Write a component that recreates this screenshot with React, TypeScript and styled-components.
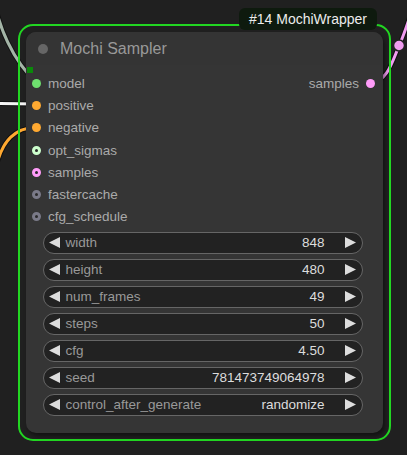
import styled, { createGlobalStyle } from "styled-components";

const GlobalStyle = createGlobalStyle`
  html, body {
    margin: 0;
    padding: 0;
    background: #202020;
  }
  body {
    font-family: "Liberation Sans", Arial, sans-serif;
  }
`;

const Canvas = styled.div`
  position: relative;
  width: 407px;
  height: 455px;
  overflow: hidden;
  box-sizing: border-box;
  padding: 24px 0 0 18px;
  background: #202020;
`;

const Wires = styled.svg`
  position: absolute;
  left: 0;
  top: 0;
  z-index: 0;
`;

const Frame = styled.div`
  position: relative;
  z-index: 1;
  width: 373px;
  height: 417px;
  box-sizing: border-box;
  border: 2px solid #22d622;
  border-radius: 15px;
  padding: 6px 6px 6px 6px;
`;

const Badge = styled.div`
  position: absolute;
  z-index: 2;
  left: 239px;
  top: 8px;
  width: 138px;
  height: 22px;
  box-sizing: border-box;
  border-radius: 6px;
  background: #0e1a0e;
  color: #ececec;
  font-size: 14px;
  line-height: 22px;
  text-align: center;
`;

const Node = styled.div`
  position: relative;
  height: 100%;
  box-sizing: border-box;
  border-radius: 10px;
  background: #353535;
  box-shadow: 2px 3px 4px rgba(0, 0, 0, 0.45);
  padding-bottom: 17px;
`;

const TitleBar = styled.div`
  display: flex;
  align-items: center;
  height: 33px;
  padding-left: 12px;
  gap: 12px;
  background: #343434;
  border-radius: 10px 10px 0 0;
  color: #999;
  font-size: 16px;
`;

const TitleDot = styled.span`
  width: 10px;
  height: 10px;
  border-radius: 50%;
  background: #666;
`;

const Marker = styled.span`
  position: absolute;
  left: 1px;
  top: 35px;
  width: 6px;
  height: 6px;
  background: #0a8a0a;
`;

const Slots = styled.div`
  display: grid;
  grid-template-columns: 1fr auto;
  padding-top: 7px;
`;

const SlotColumn = styled.div<{ $right?: boolean }>`
  display: flex;
  flex-direction: column;
  align-items: ${(p) => (p.$right ? "flex-end" : "flex-start")};
`;

const SlotRow = styled.div<{ $right?: boolean }>`
  display: flex;
  flex-direction: ${(p) => (p.$right ? "row-reverse" : "row")};
  align-items: center;
  height: 22.3px;
  gap: 7px;
  padding: ${(p) => (p.$right ? "0 8px 0 0" : "0 0 0 6px")};
  color: #aaa;
  font-size: 13.5px;
`;

const Dot = styled.span<{ $color: string; $hollow?: boolean }>`
  width: 9px;
  height: 9px;
  box-sizing: border-box;
  border-radius: 50%;
  background: ${(p) => (p.$hollow ? "#2a2a2a" : p.$color)};
  border: ${(p) => (p.$hollow ? `3px solid ${p.$color}` : "none")};
`;

const Widgets = styled.div`
  display: flex;
  flex-direction: column;
  gap: 5px;
  margin: 3.5px 20px 0 16.5px;
`;

const Widget = styled.div`
  display: flex;
  align-items: center;
  height: 22px;
  box-sizing: border-box;
  border: 1px solid #666;
  border-radius: 11px;
  background: #222;
  padding: 0 6px 0 5.5px;
  font-size: 13.5px;
`;

const Arrow = styled.svg`
  flex: none;
  width: 11px;
  height: 11px;
`;

const WidgetLabel = styled.span`
  flex: 1;
  margin-left: 5.5px;
  color: #999;
  white-space: nowrap;
`;

const WidgetValue = styled.span`
  margin-right: 20.5px;
  color: #ddd;
  white-space: nowrap;
`;

type Slot = { name: string; color: string; hollow?: boolean };

const inputs: Slot[] = [
  { name: "model", color: "#6ee06e" },
  { name: "positive", color: "#ffa931" },
  { name: "negative", color: "#ffa931" },
  { name: "opt_sigmas", color: "#cdffcd", hollow: true },
  { name: "samples", color: "#ff9cf9", hollow: true },
  { name: "fastercache", color: "#7a7a88", hollow: true },
  { name: "cfg_schedule", color: "#7a7a88", hollow: true },
];

const widgets = [
  { name: "width", value: "848" },
  { name: "height", value: "480" },
  { name: "num_frames", value: "49" },
  { name: "steps", value: "50" },
  { name: "cfg", value: "4.50" },
  { name: "seed", value: "781473749064978" },
  { name: "control_after_generate", value: "randomize" },
];

const LeftArrow = () => (
  <Arrow viewBox="0 0 11 11">
    <polygon points="11,0 0,5.5 11,11" fill="#ddd" />
  </Arrow>
);

const RightArrow = () => (
  <Arrow viewBox="0 0 11 11">
    <polygon points="0,0 11,5.5 0,11" fill="#ddd" />
  </Arrow>
);

export default function App() {
  return (
    <>
      <GlobalStyle />
      <Canvas>
        <Wires width={407} height={455} viewBox="0 0 407 455">
          <g fill="none" strokeLinecap="round">
            <path d="M -6 -2 C -2 25, 12 60, 37 83" stroke="#111" strokeWidth={5} />
            <path d="M -6 -2 C -2 25, 12 60, 37 83" stroke="#a3b4a6" strokeWidth={3} />
            <path d="M -5 103.5 L 37 104" stroke="#111" strokeWidth={5} />
            <path d="M -5 103.5 L 37 104" stroke="#f4f4f4" strokeWidth={3} />
            <path d="M -4 168 C 2 140, 15 128, 37 127" stroke="#111" strokeWidth={5} />
            <path d="M -4 168 C 2 140, 15 128, 37 127" stroke="#ffa931" strokeWidth={3} />
            <path d="M 371 84 C 388 80, 392 62, 399 46 S 410 15, 414 5" stroke="#111" strokeWidth={5} />
            <path d="M 371 84 C 388 80, 392 62, 399 46 S 410 15, 414 5" stroke="#f09cf0" strokeWidth={3} />
          </g>
          <circle cx={399} cy={45.5} r={5.5} fill="#f09cf0" stroke="#222" strokeWidth={1.5} />
        </Wires>
        <Badge>#14 MochiWrapper</Badge>
        <Frame>
          <Node>
            <TitleBar>
              <TitleDot />
              Mochi Sampler
            </TitleBar>
            <Marker />
            <Slots>
              <SlotColumn>
                {inputs.map((s) => (
                  <SlotRow key={s.name}>
                    <Dot $color={s.color} $hollow={s.hollow} />
                    {s.name}
                  </SlotRow>
                ))}
              </SlotColumn>
              <SlotColumn $right>
                <SlotRow $right>
                  <Dot $color="#ff9cf9" />
                  samples
                </SlotRow>
              </SlotColumn>
            </Slots>
            <Widgets>
              {widgets.map((w) => (
                <Widget key={w.name}>
                  <LeftArrow />
                  <WidgetLabel>{w.name}</WidgetLabel>
                  <WidgetValue>{w.value}</WidgetValue>
                  <RightArrow />
                </Widget>
              ))}
            </Widgets>
          </Node>
        </Frame>
      </Canvas>
    </>
  );
}
